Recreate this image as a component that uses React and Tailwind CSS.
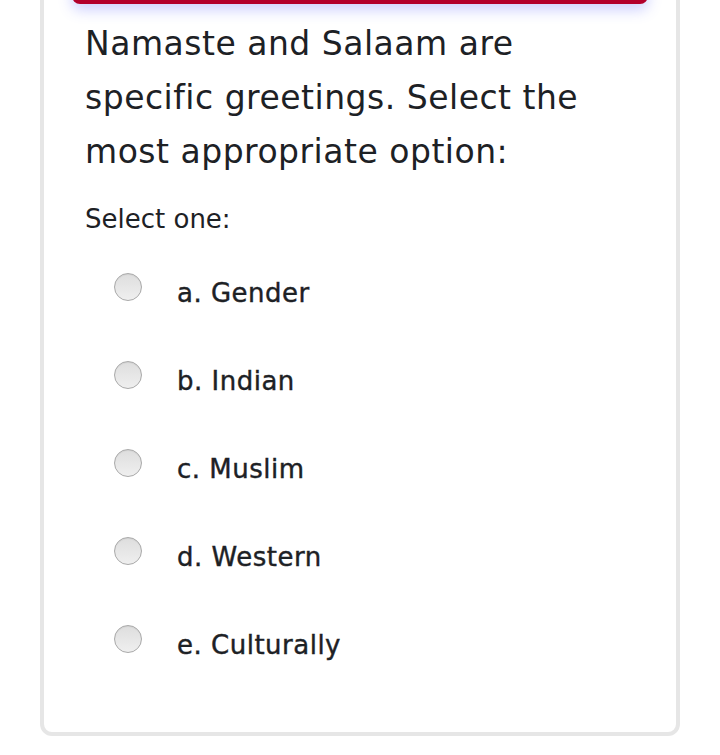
import React from 'react'

const OPTIONS = ['a. Gender', 'b. Indian', 'c. Muslim', 'd. Western', 'e. Culturally']

function Radio() {
  return (
    <span className="block w-[28px] h-[28px] rounded-full border border-[#a9a9a9] bg-gradient-to-b from-[#dedede] to-[#efefef] shadow-[inset_0_1px_1px_rgba(0,0,0,0.06)]" />
  )
}

export default function App() {
  return (
    <div className="min-h-[755px] bg-white overflow-hidden" style={{ fontFamily: '"DejaVu Sans", "Liberation Sans", sans-serif' }}>
      <div className="mx-[40px] -mt-[40px] border-4 border-[#e6e6e6] rounded-[12px] bg-white pb-[43px]">
        <div className="mx-[28px] h-[40px] rounded-b-[8px] bg-[#b3002b] shadow-[0_6px_14px_rgba(80,90,255,0.28)]" />
        <div className="pl-[41px] pr-[20px] pt-[13px] text-[#1d2125]">
          <h2 className="text-[33px] leading-[54px] font-normal tracking-[0.5px]">
            Namaste and Salaam are<br />specific greetings. Select the<br />most appropriate option:
          </h2>
          <div className="mt-[22px] text-[26px] leading-[36px]">Select one:</div>
          <div className="mt-[12px] flex flex-col">
            {OPTIONS.map(o => (
              <label key={o} className="h-[88px] flex items-center">
                <span className="ml-[29px] -mt-[12px]"><Radio /></span>
                <span className="ml-[35px] text-[26px] tracking-[0.5px] [-webkit-text-stroke:0.4px]">{o}</span>
              </label>
            ))}
          </div>
        </div>
      </div>
    </div>
  )
}
